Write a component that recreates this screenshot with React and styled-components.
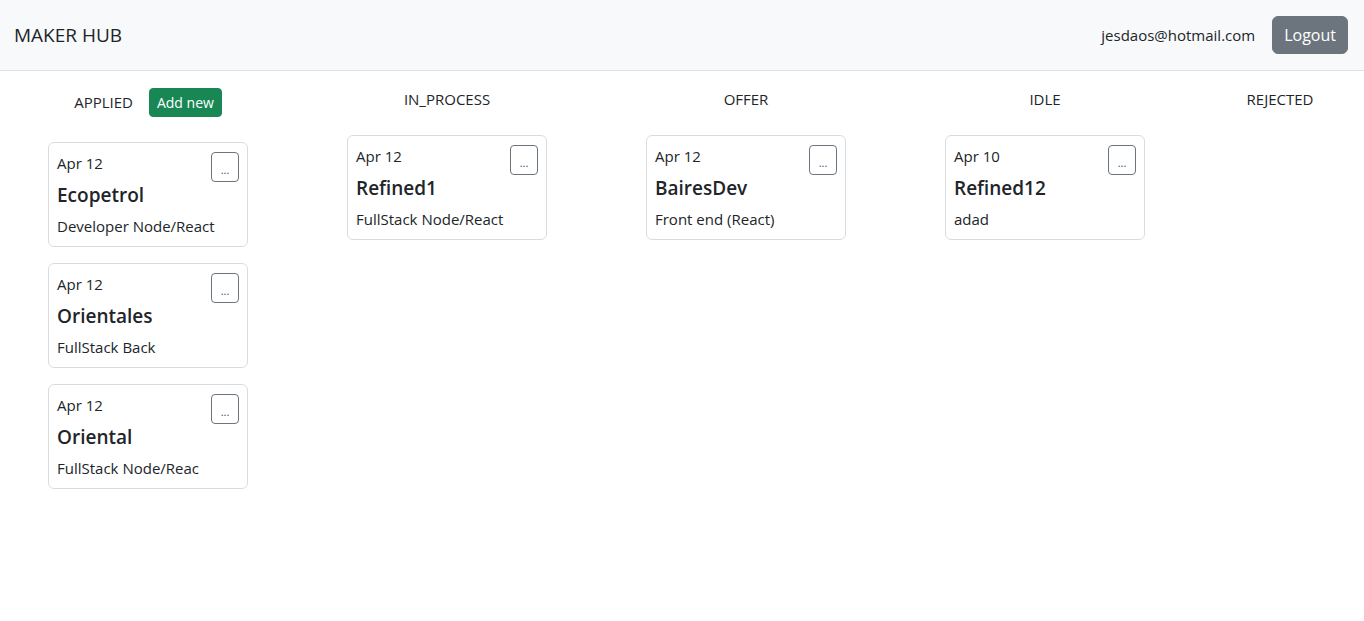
import styled, { createGlobalStyle } from "styled-components";

const GlobalStyle = createGlobalStyle`
  * { box-sizing: border-box; }
  body {
    margin: 0;
    background: #fff;
    color: #212529;
    font-family: "Open Sans", "Noto Sans", Arial, sans-serif;
    font-size: 16px;
    line-height: 1.5;
  }
`;

const Navbar = styled.nav`
  display: flex;
  align-items: center;
  justify-content: space-between;
  height: 71px;
  padding: 0 16px 0 14px;
  background: #f8f9fa;
  border-bottom: 1px solid #dee2e6;
`;

const Brand = styled.span`
  font-size: 19px;
  color: #212529;
`;

const UserBox = styled.div`
  display: flex;
  align-items: center;
  gap: 17px;
`;

const Email = styled.span`
  font-size: 15px;
`;

const Button = styled.button`
  font-family: inherit;
  border: 1px solid ${(p) => p.$bg};
  background: ${(p) => p.$bg};
  color: #fff;
  border-radius: ${(p) => (p.$small ? "4px" : "6px")};
  font-size: ${(p) => (p.$small ? "14px" : "16px")};
  padding: ${(p) => (p.$small ? "3px 7px" : "6px 11px")};
  line-height: 1.5;
  cursor: pointer;
`;

const Board = styled.main`
  display: grid;
  grid-template-columns: 299px 299px 299px 299px 1fr;
  padding-top: 16px;
`;

const Column = styled.section`
  display: flex;
  flex-direction: column;
  align-items: center;
  gap: 16px;
  padding-right: ${(p) => (p.$last ? "0" : "3px")};
`;

const ColumnHeader = styled.div`
  display: flex;
  align-items: center;
  justify-content: center;
  gap: 16px;
  height: ${(p) => (p.$tall ? "31px" : "24px")};
  margin-bottom: 8px;
  font-size: 15px;
  text-transform: uppercase;
`;

const Card = styled.article`
  width: 200px;
  padding: 8px;
  border: 1px solid #d9dcdf;
  border-radius: 6px;
  background: #fff;
`;

const CardTop = styled.div`
  display: flex;
  justify-content: space-between;
  align-items: flex-start;
  height: 32px;
`;

const CardDate = styled.span`
  font-size: 15px;
  line-height: 24px;
`;

const MoreButton = styled.button`
  width: 28px;
  height: 30px;
  margin-top: 1px;
  padding: 0 0 6px;
  background: #fff;
  border: 1px solid #6c757d;
  border-radius: 4px;
  color: #495057;
  font-size: 11px;
  line-height: 1;
  display: flex;
  align-items: flex-end;
  justify-content: center;
  font-family: inherit;
`;

const CardTitle = styled.h5`
  margin: 0;
  font-size: 19px;
  font-weight: 600;
  line-height: 24px;
`;

const CardText = styled.p`
  margin: 7px 0 0;
  font-size: 15px;
  line-height: 24px;
  white-space: nowrap;
  overflow: hidden;
`;

const columns = [
  {
    name: "APPLIED",
    add: true,
    cards: [
      { date: "Apr 12", title: "Ecopetrol", text: "Developer Node/React" },
      { date: "Apr 12", title: "Orientales", text: "FullStack Back" },
      { date: "Apr 12", title: "Oriental", text: "FullStack Node/Reac" },
    ],
  },
  {
    name: "IN_PROCESS",
    cards: [{ date: "Apr 12", title: "Refined1", text: "FullStack Node/React" }],
  },
  {
    name: "OFFER",
    cards: [{ date: "Apr 12", title: "BairesDev", text: "Front end (React)" }],
  },
  {
    name: "IDLE",
    cards: [{ date: "Apr 10", title: "Refined12", text: "adad" }],
  },
  { name: "REJECTED", cards: [] },
];

const App = () => {
  return (
    <>
      <GlobalStyle />
      <Navbar>
        <Brand>MAKER HUB</Brand>
        <UserBox>
          <Email>jesdaos@hotmail.com</Email>
          <Button $bg="#6c757d">Logout</Button>
        </UserBox>
      </Navbar>
      <Board>
        {columns.map((col, i) => (
          <Column key={col.name} $last={i === columns.length - 1}>
            <ColumnHeader $tall={col.add}>
              <span>{col.name}</span>
              {col.add && (
                <Button $bg="#198754" $small>
                  Add new
                </Button>
              )}
            </ColumnHeader>
            {col.cards.map((card) => (
              <Card key={card.title}>
                <CardTop>
                  <CardDate>{card.date}</CardDate>
                  <MoreButton>...</MoreButton>
                </CardTop>
                <CardTitle>{card.title}</CardTitle>
                <CardText>{card.text}</CardText>
              </Card>
            ))}
          </Column>
        ))}
      </Board>
    </>
  );
};

export default App;
